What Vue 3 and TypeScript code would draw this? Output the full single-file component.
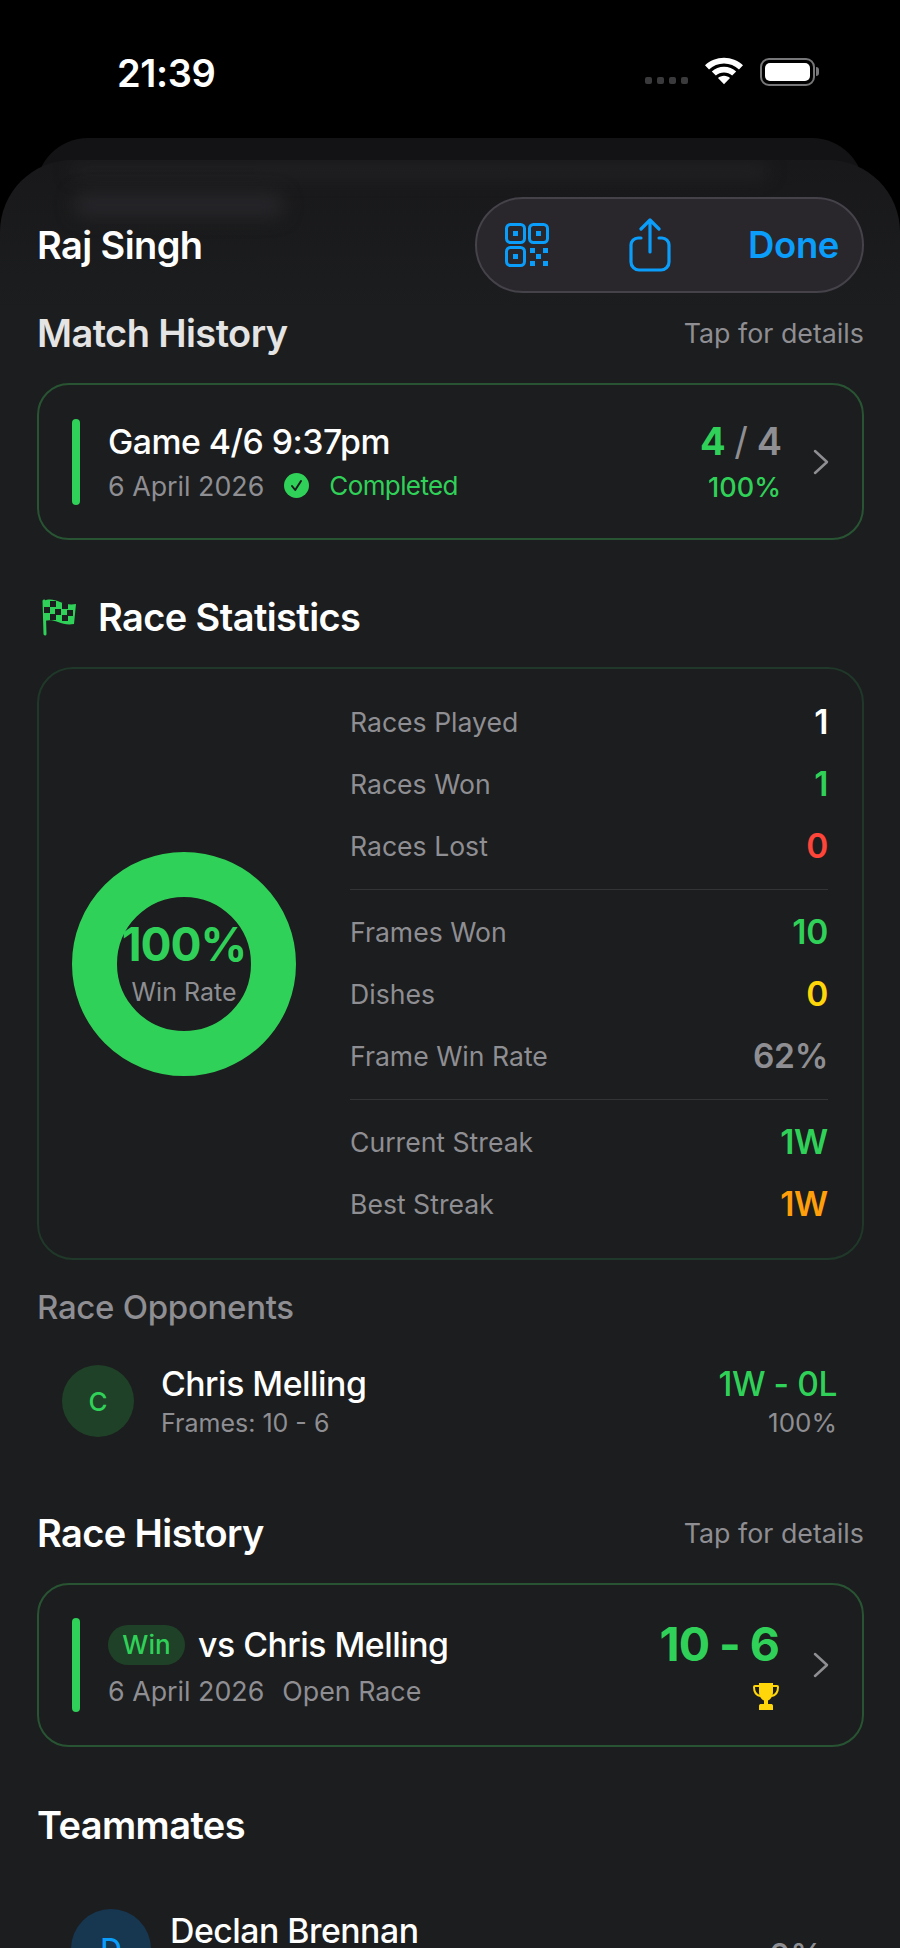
<script setup lang="ts">
interface StatRow {
  label: string
  value: string
  tone: 'white' | 'green' | 'red' | 'yellow' | 'gray' | 'orange'
}

const statGroups: StatRow[][] = [
  [
    { label: 'Races Played', value: '1', tone: 'white' },
    { label: 'Races Won', value: '1', tone: 'green' },
    { label: 'Races Lost', value: '0', tone: 'red' },
  ],
  [
    { label: 'Frames Won', value: '10', tone: 'green' },
    { label: 'Dishes', value: '0', tone: 'yellow' },
    { label: 'Frame Win Rate', value: '62%', tone: 'gray' },
  ],
  [
    { label: 'Current Streak', value: '1W', tone: 'green' },
    { label: 'Best Streak', value: '1W', tone: 'orange' },
  ],
]

// checker cells on the flag
const flagCells = [
  [9, 2], [21, 4], [3, 8], [14, 10], [26, 11], [9, 15], [21, 16],
]
</script>

<template>
  <div class="screen">
    <!-- Status bar -->
    <div class="status-bar">
      <span class="time">21:39</span>
      <div class="status-icons">
        <div class="signal"><i></i><i></i><i></i><i></i></div>
        <svg class="wifi" width="38" height="28" viewBox="2 3.500 34 24.500">
          <path d="M19 4C12.500 4 6.600 6.500 2 10.700l3.600 3.600C9.200 11 13.900 9 19 9s9.800 2 13.400 5.300l3.600-3.600C31.400 6.500 25.500 4 19 4Z" fill="#fff" />
          <path d="M19 12c-4.200 0-8 1.600-10.900 4.300l3.600 3.500C13.700 18 16.200 17 19 17s5.300 1 7.300 2.800l3.600-3.500C27 13.600 23.200 12 19 12Z" fill="#fff" />
          <path d="M19 20c-2.100 0-4 .8-5.400 2.100L19 27.500l5.400-5.400C23 20.800 21.100 20 19 20Z" fill="#fff" />
        </svg>
        <div class="battery"><div class="battery-fill"></div></div>
      </div>
    </div>

    <!-- Sheet peeking out behind the front one -->
    <div class="back-sheet"></div>

    <div class="sheet">
      <div class="blur-text blur-a"></div>
      <div class="blur-text blur-b"></div>

      <!-- Nav -->
      <div class="nav">
        <h1 class="player">Raj Singh</h1>
        <div class="nav-pill">
          <svg width="44" height="44" viewBox="0 0 44 44" fill="none" stroke="#0a9dfa" stroke-width="3">
            <rect x="1.500" y="1.500" width="18" height="18" rx="4" />
            <rect x="24.500" y="1.500" width="18" height="18" rx="4" />
            <rect x="1.500" y="24.500" width="18" height="18" rx="4" />
            <g fill="#0a9dfa" stroke="none">
              <rect x="8" y="8" width="5" height="5" />
              <rect x="31" y="8" width="5" height="5" />
              <rect x="8" y="31" width="5" height="5" />
              <rect x="25" y="25" width="5" height="5" />
              <rect x="38" y="25" width="5" height="5" />
              <rect x="31" y="31" width="5" height="5" />
              <rect x="25" y="38" width="5" height="5" />
              <rect x="38" y="38" width="5" height="5" />
            </g>
          </svg>
          <svg class="share" width="42" height="54" viewBox="0 0 42 54" fill="none" stroke="#0a9dfa" stroke-width="3.200" stroke-linecap="round" stroke-linejoin="round">
            <path d="M12 20H9a7 7 0 0 0-7 7v17a8 8 0 0 0 8 8h22a8 8 0 0 0 8-8V27a7 7 0 0 0-7-7h-3" />
            <path d="M21 34V3M12 11l9-9 9 9" />
          </svg>
          <span class="done">Done</span>
        </div>
      </div>

      <!-- Match history -->
      <div class="section-head match-head">
        <h2 class="section-title dim">Match History</h2>
        <span class="tap-hint">Tap for details</span>
      </div>
      <div class="card row-card match-card">
        <div class="accent-bar"></div>
        <div class="row-main">
          <div class="row-title">Game 4/6 9:37pm</div>
          <div class="row-sub">
            <span>6 April 2026</span>
            <svg class="check" width="25" height="25" viewBox="0 0 25 25">
              <circle cx="12.500" cy="12.500" r="12.500" fill="#30d158" />
              <path d="M8 13l3.200 4L17 8" fill="none" stroke="#1c1d1e" stroke-width="2" stroke-linecap="round" stroke-linejoin="round" />
            </svg>
            <span class="green completed">Completed</span>
          </div>
        </div>
        <div class="row-score">
          <div class="fraction"><b class="green">4</b> <span class="slash">/</span> <b class="gray">4</b></div>
          <div class="fraction-pct green">100%</div>
        </div>
        <svg class="chevron" width="16" height="26" viewBox="0 0 16 26" fill="none" stroke="#8e8e93" stroke-width="2.500" stroke-linecap="round" stroke-linejoin="round">
          <path d="M2 2l12 11L2 24" />
        </svg>
      </div>

      <!-- Race statistics -->
      <div class="stats-head">
        <svg width="36" height="37" viewBox="0 0 36 37">
          <path d="M3 2C8-1 14 1 19 3s10 3 16 2l-2 20c-6 1-11 0-16-2s-9-2-14-1Z" fill="#30d158" />
          <path d="M3 2l1 33" stroke="#30d158" stroke-width="3" stroke-linecap="round" fill="none" />
          <rect v-for="(c, i) in flagCells" :key="i" :x="c[0]" :y="c[1]" width="6" height="6" fill="#1c1d1e" />
        </svg>
        <h2 class="section-title">Race Statistics</h2>
      </div>
      <div class="card stats-card">
        <div class="donut">
          <div class="donut-value">100%</div>
          <div class="donut-label">Win Rate</div>
        </div>
        <div class="stats-list">
          <div v-for="(group, g) in statGroups" :key="g" class="stats-group">
            <div v-for="row in group" :key="row.label" class="stat-row">
              <span class="stat-label">{{ row.label }}</span>
              <span class="stat-value" :class="row.tone">{{ row.value }}</span>
            </div>
          </div>
        </div>
      </div>

      <!-- Opponents -->
      <h3 class="sub-title">Race Opponents</h3>
      <div class="person opponent">
        <div class="avatar avatar-green">C</div>
        <div class="person-main">
          <div class="person-name">Chris Melling</div>
          <div class="person-sub">Frames: 10 - 6</div>
        </div>
        <div class="person-side">
          <div class="record green">1W - 0L</div>
          <div class="record-pct">100%</div>
        </div>
      </div>

      <!-- Race history -->
      <div class="section-head history-head">
        <h2 class="section-title">Race History</h2>
        <span class="tap-hint">Tap for details</span>
      </div>
      <div class="card row-card race-card">
        <div class="accent-bar"></div>
        <div class="row-main">
          <div class="race-title">
            <span class="win-pill">Win</span>
            <span class="row-title">vs Chris Melling</span>
          </div>
          <div class="row-sub race-sub">
            <span>6 April 2026</span>
            <span>Open Race</span>
          </div>
        </div>
        <div class="row-score">
          <div class="race-score green">10 - 6</div>
          <svg class="trophy" width="26" height="29" viewBox="0 0 26 29">
            <path d="M6 1h14v9c0 4.500-2.500 7.500-5 8.500V22h3.500c1 0 1.500 1 1.500 2v4H6v-4c0-1 .5-2 1.500-2H11v-3.500C8.500 17.500 6 14.500 6 10Z" fill="#ffd60a" />
            <path d="M6 4H2c-.6 0-1 .5-1 1 0 5 2 8 6 9M20 4h4c.6 0 1 .5 1 1 0 5-2 8-6 9" fill="none" stroke="#ffd60a" stroke-width="2" />
          </svg>
        </div>
        <svg class="chevron" width="16" height="26" viewBox="0 0 16 26" fill="none" stroke="#8e8e93" stroke-width="2.500" stroke-linecap="round" stroke-linejoin="round">
          <path d="M2 2l12 11L2 24" />
        </svg>
      </div>

      <!-- Teammates -->
      <h2 class="section-title mates-title">Teammates</h2>
      <div class="person mate">
        <div class="avatar avatar-blue">D</div>
        <div class="person-main">
          <div class="person-name">Declan Brennan</div>
        </div>
        <div class="mate-pct">0%</div>
      </div>
    </div>
  </div>
</template>

<style>
html,
body {
  margin: 0;
  background: #000;
}
</style>

<style scoped>
.screen {
  --green: #30d158;
  --gray: #8e8e93;
  --blue: #0a9dfa;
  --sheet: #1c1d1e;
  position: relative;
  width: 900px;
  height: 1948px;
  overflow: hidden;
  background: #000;
  font-family: Inter, 'Liberation Sans', sans-serif;
  color: #fff;
}

/* Status bar */
.status-bar {
  height: 160px;
  box-sizing: border-box;
  padding: 50px 85px 0 117px;
  display: flex;
  justify-content: space-between;
  align-items: flex-start;
}

.time {
  font-size: 38px;
  line-height: 46px;
  font-weight: 600;
  letter-spacing: -0.4px;
}

.status-icons {
  display: flex;
  align-items: center;
  gap: 17px;
  margin-top: 8px;
}

.signal {
  display: flex;
  gap: 5px;
  margin-top: 16px;
}

.signal i {
  width: 7px;
  height: 7px;
  border-radius: 2px;
  background: #3a3a3c;
}

.wifi {
  margin-top: -2px;
}

.battery {
  position: relative;
  box-sizing: border-box;
  width: 55px;
  height: 28px;
  padding: 3px;
  border: 2px solid #77777a;
  border-radius: 9px;
}

.battery::after {
  content: '';
  position: absolute;
  right: -6px;
  top: 7px;
  width: 3px;
  height: 9px;
  border-radius: 0 3px 3px 0;
  background: #77777a;
}

.battery-fill {
  height: 100%;
  border-radius: 5px;
  background: #fff;
}

/* Sheets */
.back-sheet {
  position: absolute;
  left: 36px;
  right: 36px;
  top: 138px;
  height: 100px;
  border-radius: 52px 52px 0 0;
  background: #131315;
}

.sheet {
  position: relative;
  height: 1788px;
  box-sizing: border-box;
  padding: 37px 36px 0 37px;
  overflow: hidden;
  border-radius: 72px 72px 0 0;
  background: linear-gradient(#18181a 0, #1c1d1e 150px);
}

.blur-text {
  position: absolute;
  height: 22px;
  border-radius: 11px;
  background: #26262a;
  filter: blur(9px);
}

.blur-a {
  left: 70px;
  right: 130px;
  top: 4px;
  height: 14px;
  opacity: 0.7;
}

.blur-b {
  left: 74px;
  width: 210px;
  top: 33px;
  height: 24px;
}

/* Nav */
.nav {
  display: flex;
  align-items: center;
  justify-content: space-between;
  height: 96px;
}

.player {
  margin: 0;
  font-size: 38px;
  font-weight: 600;
  letter-spacing: -0.6px;
}

.nav-pill {
  box-sizing: border-box;
  width: 389px;
  height: 96px;
  padding: 0 23px 0 28px;
  display: flex;
  align-items: center;
  justify-content: space-between;
  border: 2px solid #45424a;
  border-radius: 48px;
  background: #29272c;
}

.share {
  margin-left: 3px;
}

.done {
  font-size: 36.500px;
  font-weight: 600;
  color: var(--blue);
  letter-spacing: -0.4px;
}

/* Section heads */
.section-head {
  display: flex;
  justify-content: space-between;
  align-items: center;
  height: 44px;
}

.match-head {
  margin-top: 18px;
}

.history-head {
  margin-top: 73px;
}

.section-title {
  margin: 0;
  font-size: 38px;
  line-height: 44px;
  font-weight: 600;
  letter-spacing: -0.6px;
}

.section-title.dim {
  color: #e4e4e4;
}

.tap-hint {
  font-size: 26.800px;
  color: var(--gray);
}

.card {
  box-sizing: border-box;
  border: 2px solid #285433;
  border-radius: 32px;
}

.row-card {
  display: flex;
  align-items: center;
  padding: 0 33px;
}

.match-card {
  height: 157px;
  margin-top: 28px;
}

.race-card {
  height: 164px;
  margin-top: 28px;
}

.accent-bar {
  width: 8px;
  height: 86px;
  border-radius: 4px;
  background: var(--green);
  flex-shrink: 0;
}

.race-card .accent-bar {
  height: 94px;
}

.row-main {
  flex: 1;
  margin-left: 28px;
  padding-top: 3px;
}

.match-card .row-main {
  padding-top: 1px;
}

.row-title {
  font-size: 33.800px;
  line-height: 40px;
  font-weight: 500;
  letter-spacing: -0.5px;
}

.row-sub {
  display: flex;
  align-items: center;
  gap: 20px;
  margin-top: 7px;
  font-size: 26.800px;
  line-height: 34px;
  color: var(--gray);
}

.completed {
  font-size: 26px;
  letter-spacing: -0.6px;
}

.row-score {
  display: flex;
  flex-direction: column;
  align-items: flex-end;
  margin-right: 32px;
}

.fraction {
  font-size: 38px;
  line-height: 44px;
  letter-spacing: -1px;
}

.fraction b {
  font-weight: 700;
}

.fraction b.gray {
  font-weight: 600;
}

.slash {
  color: var(--gray);
  font-weight: 400;
}

.fraction-pct {
  margin-top: 8px;
  font-size: 27px;
  line-height: 34px;
  font-weight: 500;
}

.chevron {
  flex-shrink: 0;
}

.green {
  color: var(--green);
}

.gray {
  color: var(--gray);
}

.white {
  color: #fff;
}

.red {
  color: #ff453a;
}

.yellow {
  color: #ffd60a;
}

.orange {
  color: #ff9f0a;
}

/* Race statistics */
.stats-head {
  display: flex;
  align-items: center;
  gap: 21px;
  margin-top: 55px;
  padding-left: 4px;
  height: 44px;
}

.stats-card {
  display: flex;
  align-items: center;
  height: 593px;
  margin-top: 28px;
  padding: 0 34px 0 33px;
  border-color: #20382a;
  border-radius: 36px;
}

.donut {
  box-sizing: border-box;
  width: 224px;
  height: 224px;
  padding-bottom: 2px;
  flex-shrink: 0;
  border: 45px solid var(--green);
  border-radius: 50%;
  display: flex;
  flex-direction: column;
  align-items: center;
  justify-content: center;
}

.donut-value {
  font-size: 46px;
  line-height: 50px;
  font-weight: 700;
  color: var(--green);
  letter-spacing: -1px;
  white-space: nowrap;
}

.donut-label {
  margin-top: 8px;
  font-size: 25px;
  line-height: 30px;
  color: var(--gray);
  white-space: nowrap;
}

.stats-list {
  flex: 1;
  margin: -2px 0 0 54px;
}

.stats-group + .stats-group {
  margin-top: 12px;
  padding-top: 11px;
  border-top: 1px solid #333436;
}

.stat-row {
  display: flex;
  justify-content: space-between;
  align-items: center;
  height: 62px;
}

.stat-label {
  font-size: 26.600px;
  color: var(--gray);
}

.stat-value {
  font-size: 33.500px;
  font-weight: 600;
  letter-spacing: -0.3px;
}

/* Opponents / people */
.sub-title {
  margin: 28px 0 0;
  font-size: 33px;
  line-height: 38px;
  font-weight: 500;
  color: var(--gray);
  letter-spacing: -0.3px;
}

.person {
  display: flex;
  align-items: center;
}

.opponent {
  margin-top: 38px;
  padding: 0 27px 0 25px;
}

.avatar {
  border-radius: 50%;
  display: flex;
  align-items: center;
  justify-content: center;
  flex-shrink: 0;
  font-weight: 500;
}

.avatar-green {
  width: 72px;
  height: 72px;
  background: #1f4128;
  color: var(--green);
  font-size: 26px;
}

.person-main {
  flex: 1;
  margin-left: 27px;
}

.person-name {
  font-size: 33.800px;
  line-height: 40px;
  font-weight: 500;
  letter-spacing: -0.5px;
}

.person-sub {
  font-size: 25px;
  line-height: 30px;
  margin-top: 4px;
  color: var(--gray);
}

.person-side {
  text-align: right;
}

.record {
  font-size: 33.500px;
  line-height: 40px;
  font-weight: 550;
  letter-spacing: -0.4px;
}

.record-pct {
  font-size: 26px;
  line-height: 30px;
  margin-top: 4px;
  color: var(--gray);
}

/* Race card */
.race-title {
  display: flex;
  align-items: center;
  gap: 13px;
}

.win-pill {
  box-sizing: border-box;
  width: 77px;
  height: 40px;
  border-radius: 20px;
  background: #1f4128;
  color: var(--green);
  font-size: 26px;
  font-weight: 500;
  line-height: 40px;
  text-align: center;
}

.race-sub {
  gap: 18px;
  margin-top: 9px;
}

.race-card .row-score {
  margin-right: 34px;
}

.race-score {
  font-size: 46.500px;
  line-height: 50px;
  font-weight: 700;
  letter-spacing: -1px;
}

.trophy {
  margin-top: 13px;
}

/* Teammates */
.mates-title {
  margin-top: 56px;
}

.mate {
  margin-top: 62px;
  padding: 0 41px 0 34px;
  align-items: flex-start;
}

.avatar-blue {
  width: 80px;
  height: 80px;
  background: #173650;
  color: var(--blue);
  font-size: 30px;
}

.mate .person-main {
  margin-left: 19px;
  padding-top: 2px;
}

.mate-pct {
  margin-top: 26px;
  font-size: 33px;
  font-weight: 550;
  color: var(--gray);
}
</style>
